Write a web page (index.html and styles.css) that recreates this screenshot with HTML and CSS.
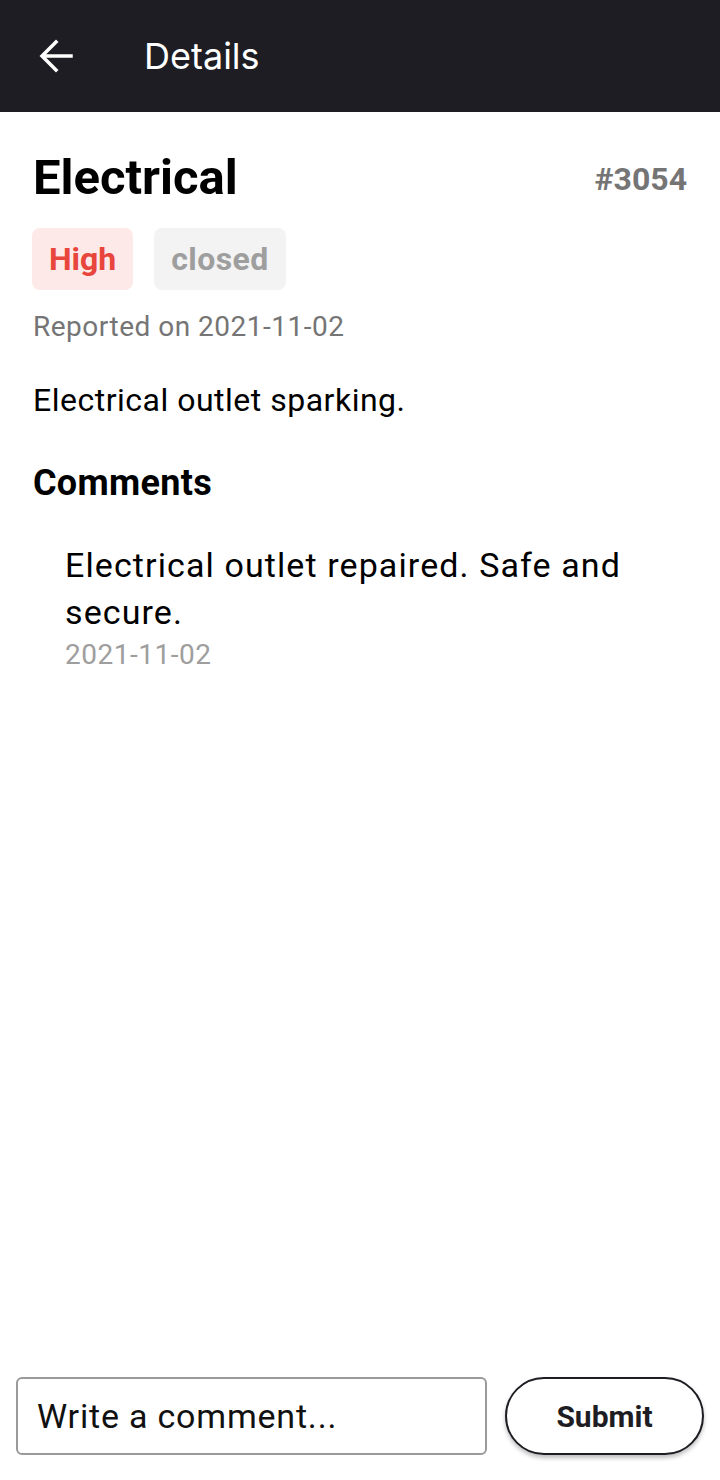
FILE: index.html
```html
<!DOCTYPE html>
<html>
<head>
<meta charset="utf-8">
<link rel="stylesheet" href="styles.css">
</head>
<body>
<div class="page">
  <header class="appbar">
    <svg class="back" width="34" height="34" viewBox="0 0 34 34" aria-hidden="true">
      <path d="M32 17H4M17 3L3 17l14 14" fill="none" stroke="#fff" stroke-width="3.5" stroke-linecap="square"/>
    </svg>
    <h1 class="appbar-title">Details</h1>
  </header>
  <main class="content">
    <div class="title-row">
      <h2 class="title">Electrical</h2>
      <span class="ticket">#3054</span>
    </div>
    <div class="chips">
      <span class="chip chip-high">High</span>
      <span class="chip chip-closed">closed</span>
    </div>
    <p class="reported">Reported on 2021-11-02</p>
    <p class="desc">Electrical outlet sparking.</p>
    <h3 class="section">Comments</h3>
    <div class="comment">
      <p class="comment-text">Electrical outlet repaired. Safe and secure.</p>
      <p class="comment-date">2021-11-02</p>
    </div>
  </main>
  <footer class="composer">
    <div class="input">Write a comment...</div>
    <button class="submit">Submit</button>
  </footer>
</div>
</body>
</html>
```
FILE: styles.css
```css
* { box-sizing: border-box; }
html, body { margin: 0; padding: 0; background: #fff; }
body { font-family: Roboto, "Noto Sans", sans-serif; color: #000; }
.page { height: 1480px; display: flex; flex-direction: column; }

.appbar {
  height: 112px; background: #1e1d23; display: flex; align-items: center;
  padding-left: 39px; flex: none;
}
.back { display: block; }
.appbar-title {
  margin: 0 0 0 71px; font-family: Inter, sans-serif; font-weight: 400;
  font-size: 36px; color: #fff; line-height: 1;
}

.content { flex: 1; padding: 42px 33px 0; }
.title-row { display: flex; justify-content: space-between; align-items: center; }
.title { margin: 0; font-size: 49px; font-weight: 700; line-height: 48px; }
.ticket { font-size: 32px; font-weight: 700; color: #757575; line-height: 32px; padding-top: 1px; }

.chips { display: flex; gap: 21px; margin-top: 26px; margin-left: -1px; }
.chip {
  display: inline-flex; align-items: center; height: 62px; padding: 0 17px;
  border-radius: 8px; font-size: 32px; font-weight: 700;
}
.chip-high { background: #fde9e7; color: #e8453c; }
.chip-closed { background: #f3f3f3; color: #9e9e9e; letter-spacing: 0.4px; }

.reported { margin: 19px 0 0; font-size: 28px; letter-spacing: 0.5px; color: #757575; line-height: 36px; }
.desc { margin: 35px 0 0; font-size: 32px; letter-spacing: 0.5px; line-height: 40px; }
.section { margin: 41px 0 0; font-size: 36px; letter-spacing: 0.3px; font-weight: 700; line-height: 44px; }

.comment { padding: 37px 32px 0; }
.comment-text { margin: 0; font-size: 34px; line-height: 47px; letter-spacing: 1.1px; }
.comment-date { margin: 1px 0 0; font-size: 28px; line-height: 36px; letter-spacing: 0.5px; color: #9e9e9e; }

.composer { flex: none; display: flex; gap: 18px; padding: 0 16px 25px; align-items: center; }
.input {
  flex: 1; height: 78px; border: 2px solid #9a9a9a; border-radius: 6px;
  display: flex; align-items: center; padding-left: 19px;
  font-size: 34px; letter-spacing: 0.8px; color: #111;
}
.submit {
  width: 199px; height: 78px; border: 2px solid #1e1d23; border-radius: 39px; background: #fff;
  font-family: Roboto, sans-serif; font-size: 30px; font-weight: 700; color: #1e1d23;
  box-shadow: 0 3px 4px rgba(0,0,0,0.25);
}
```
